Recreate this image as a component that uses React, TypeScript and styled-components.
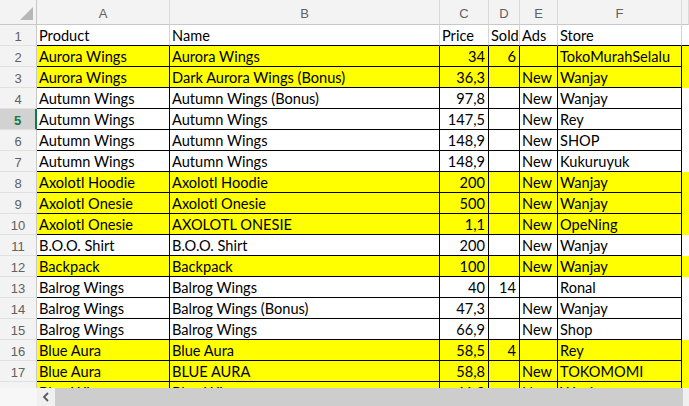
import React, { FC } from 'react';
import styled, { createGlobalStyle, css } from 'styled-components';

const GlobalStyle = createGlobalStyle`
  html, body {
    margin: 0;
    padding: 0;
    background: #ffffff;
  }
  * {
    box-sizing: border-box;
  }
`;

type Row = {
  product: string;
  name: string;
  price: string;
  sold: string;
  ads: string;
  store: string;
  highlight?: boolean;
};

const rows: Row[] = [
  { product: 'Aurora Wings', name: 'Aurora Wings', price: '34', sold: '6', ads: '', store: 'TokoMurahSelalu', highlight: true },
  { product: 'Aurora Wings', name: 'Dark Aurora Wings (Bonus)', price: '36,3', sold: '', ads: 'New', store: 'Wanjay', highlight: true },
  { product: 'Autumn Wings', name: 'Autumn Wings (Bonus)', price: '97,8', sold: '', ads: 'New', store: 'Wanjay' },
  { product: 'Autumn Wings', name: 'Autumn Wings', price: '147,5', sold: '', ads: 'New', store: 'Rey' },
  { product: 'Autumn Wings', name: 'Autumn Wings', price: '148,9', sold: '', ads: 'New', store: 'SHOP' },
  { product: 'Autumn Wings', name: 'Autumn Wings', price: '148,9', sold: '', ads: 'New', store: 'Kukuruyuk' },
  { product: 'Axolotl Hoodie', name: 'Axolotl Hoodie', price: '200', sold: '', ads: 'New', store: 'Wanjay', highlight: true },
  { product: 'Axolotl Onesie', name: 'Axolotl Onesie', price: '500', sold: '', ads: 'New', store: 'Wanjay', highlight: true },
  { product: 'Axolotl Onesie', name: 'AXOLOTL ONESIE', price: '1,1', sold: '', ads: 'New', store: 'OpeNing', highlight: true },
  { product: 'B.O.O. Shirt', name: 'B.O.O. Shirt', price: '200', sold: '', ads: 'New', store: 'Wanjay' },
  { product: 'Backpack', name: 'Backpack', price: '100', sold: '', ads: 'New', store: 'Wanjay', highlight: true },
  { product: 'Balrog Wings', name: 'Balrog Wings', price: '40', sold: '14', ads: '', store: 'Ronal' },
  { product: 'Balrog Wings', name: 'Balrog Wings (Bonus)', price: '47,3', sold: '', ads: 'New', store: 'Wanjay' },
  { product: 'Balrog Wings', name: 'Balrog Wings', price: '66,9', sold: '', ads: 'New', store: 'Shop' },
  { product: 'Blue Aura', name: 'Blue Aura', price: '58,5', sold: '4', ads: '', store: 'Rey', highlight: true },
  { product: 'Blue Aura', name: 'BLUE AURA', price: '58,8', sold: '', ads: 'New', store: 'TOKOMOMI', highlight: true },
  { product: 'Blue Wings', name: 'Blue Wings', price: '61,2', sold: '', ads: 'New', store: 'Wanjay', highlight: true },
];

const columns = ['A', 'B', 'C', 'D', 'E', 'F', ''];
const activeRow = 5;

const Window = styled.div`
  width: 689px;
  height: 406px;
  display: flex;
  flex-direction: column;
  overflow: hidden;
  background: #ffffff;
`;

const Sheet = styled.div`
  flex: 1;
  min-height: 0;
  overflow: hidden;
  display: grid;
  grid-template-columns: 37px 133px 270px 49px 31px 38px 124px 1fr;
  grid-auto-rows: 21px;
  grid-template-rows: 25px;
  align-content: start;
  font-family: 'Lato', 'Liberation Sans', sans-serif;
`;

const Corner = styled.div`
  position: relative;
  background: #f3f3f3;
  border-right: 1px solid #c8c8c8;
  border-bottom: 1px solid #c8c8c8;

  &:after {
    content: '';
    position: absolute;
    right: 3px;
    bottom: 4px;
    border-style: solid;
    border-width: 0 0 13px 13px;
    border-color: transparent transparent #b7b7b7 transparent;
  }
`;

const ColHeader = styled.div`
  display: flex;
  align-items: center;
  justify-content: center;
  padding-top: 2px;
  background: #f3f3f3;
  border-right: 1px solid #dadada;
  border-bottom: 1px solid #c8c8c8;
  color: #616161;
  font-family: 'Liberation Sans', sans-serif;
  font-size: 13px;
`;

const RowHeader = styled.div<{ $active?: boolean }>`
  display: flex;
  align-items: center;
  justify-content: center;
  padding-top: 3px;
  background: #f3f3f3;
  border-right: 1px solid #c8c8c8;
  border-bottom: 1px solid #e1e1e1;
  color: #616161;
  font-family: 'Liberation Sans', sans-serif;
  font-size: 13px;

  ${({ $active }) =>
    $active &&
    css`
      background: #d2d2d2;
      color: #107c41;
      font-weight: bold;
      border-right: 2px solid #107c41;
    `}
`;

const Cell = styled.div<{ $fill?: boolean; $right?: boolean; $title?: boolean; $last?: boolean }>`
  display: flex;
  align-items: flex-end;
  justify-content: ${({ $right }) => ($right ? 'flex-end' : 'flex-start')};
  padding: 0 3px 0 2px;
  overflow: hidden;
  white-space: nowrap;
  background: ${({ $fill }) => ($fill ? '#ffff00' : '#ffffff')};
  border-right: 1px solid ${({ $title }) => ($title ? '#d4d4d4' : '#000000')};
  border-bottom: 1px solid #000000;
  color: #000000;
  font-size: 14.6px;
  line-height: 18px;

  ${({ $last, $title }) =>
    $last &&
    css`
      border-right: none;
      border-bottom-color: ${$title ? '#000000' : 'transparent'};
    `}
`;

const ScrollBar = styled.div`
  height: 18px;
  flex: none;
  display: flex;
  background: #f0f0f0;
`;

const ScrollGutter = styled.div`
  width: 37px;
  background: #f7f7f7;
`;

const ScrollButton = styled.div`
  width: 18px;
  display: flex;
  align-items: center;
  justify-content: center;
  background: #f0f0f0;
`;

const Thumb = styled.div`
  flex: 1;
  margin-right: 6px;
  background: #cdcdcd;
`;

const App: FC = () => (
  <>
    <GlobalStyle />
    <Window>
      <Sheet>
        <Corner />
        {columns.map((c, i) => (
          <ColHeader key={i}>{c}</ColHeader>
        ))}

        <RowHeader>1</RowHeader>
        <Cell $title>Product</Cell>
        <Cell $title>Name</Cell>
        <Cell $title>Price</Cell>
        <Cell $title>Sold</Cell>
        <Cell $title>Ads</Cell>
        <Cell $title>Store</Cell>
        <Cell $title $last />

        {rows.map((r, i) => {
          const n = i + 2;
          return (
            <React.Fragment key={n}>
              <RowHeader $active={n === activeRow}>{n}</RowHeader>
              <Cell $fill={r.highlight}>{r.product}</Cell>
              <Cell $fill={r.highlight}>{r.name}</Cell>
              <Cell $fill={r.highlight} $right>{r.price}</Cell>
              <Cell $fill={r.highlight} $right>{r.sold}</Cell>
              <Cell $fill={r.highlight}>{r.ads}</Cell>
              <Cell $fill={r.highlight}>{r.store}</Cell>
              <Cell $fill={r.highlight} $last />
            </React.Fragment>
          );
        })}
      </Sheet>

      <ScrollBar>
        <ScrollGutter />
        <ScrollButton>
          <svg width="8" height="10" viewBox="0 0 8 10">
            <path d="M6 1 L2 5 L6 9" fill="none" stroke="#5a5a5a" strokeWidth="1.8" />
          </svg>
        </ScrollButton>
        <Thumb />
      </ScrollBar>
    </Window>
  </>
);

export default App;
